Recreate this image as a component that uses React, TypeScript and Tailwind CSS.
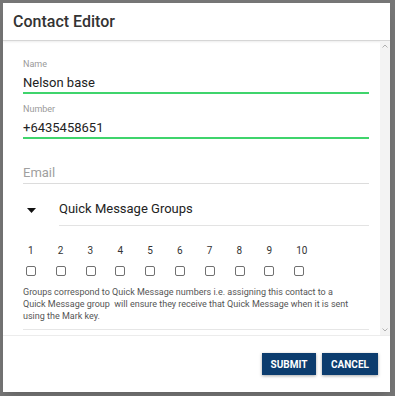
import React from "react";

type FieldProps = {
	label: string;
	value?: string;
	placeholder?: string;
	active?: boolean;
};

const Field = ({ label, value, placeholder, active }: FieldProps) => {
	return (
		<div className={active ? "border-b-2 border-[#3fd46c]" : "border-b border-[#dcdcdc] pb-[1px]"}>
			<div className="h-[12px] text-[9px] leading-[12px] text-[#9a9a9a]">{label}</div>
			<div className={`mt-[4px] h-[18px] text-[13px] leading-[18px] ${value ? "text-[#222]" : "text-[#a0a0a0]"}`}>
				{value || placeholder}
			</div>
		</div>
	);
};

const groups = [1, 2, 3, 4, 5, 6, 7, 8, 9, 10];

const App = () => {
	const [checked, setChecked] = React.useState<number[]>([]);

	// *** toggle a quick message group ***
	const toggle = (n: number) => {
		setChecked((prev) => (prev.includes(n) ? prev.filter((x) => x !== n) : [...prev, n]));
	};

	return (
		<div
			className="flex h-[396px] w-[395px] bg-[#767676] pt-[3px] pb-[4px] pl-[3px] pr-[5px]"
			style={{ fontFamily: "Roboto, 'Liberation Sans', sans-serif" }}
		>
			<div className="flex flex-1 flex-col overflow-hidden bg-white shadow-lg">
				{/* *** header *** */}
				<div className="flex h-[38px] shrink-0 items-center border-b border-[#d6d6d6] px-[10px] shadow-[0_1px_2px_rgba(0,0,0,0.08)]">
					<h2 className="text-[16px] font-medium text-[#333]">Contact Editor</h2>
				</div>

				{/* *** body *** */}
				<div className="flex h-[294px] shrink-0 overflow-hidden">
					<div className="flex-1 pl-[20px] pr-[11px] pt-[17px]">
						<Field label="Name" value="Nelson base" active />
						<div className="mt-[9px]">
							<Field label="Number" value="+6435458651" active />
						</div>
						<div className="mt-[9px]">
							<Field label="" placeholder="Email" />
						</div>

						<div className="mt-[16px] flex">
							<div className="flex w-[36px] items-center pl-[4px] pb-[6px]">
								<svg width="9" height="5" viewBox="0 0 9 5">
									<path d="M0 0 L9 0 L4.5 5 Z" fill="#111" />
								</svg>
							</div>
							<div className="flex-1 border-b border-[#e3e3e3] pb-[7px] text-[13px] leading-[18px] text-[#222]">
								Quick Message Groups
							</div>
						</div>

						<div className="mt-[19px] ml-[3px] flex">
							{groups.map((n) => (
								<div key={n} className="flex w-[29.8px] flex-col">
									<span className="pl-[2px] text-[10px] leading-[12px] text-[#333]">{n}</span>
									<button
										onClick={() => toggle(n)}
										className={`mt-[9px] h-[10px] w-[10px] rounded-[2px] border-[1.5px] border-[#707070] ${checked.includes(n) ? "bg-[#0c3c6e]" : "bg-white"}`}
									/>
								</div>
							))}
						</div>

						<p className="mt-[10px] max-w-[332px] text-[9px] leading-[12px] text-[#555]">
							Groups correspond to Quick Message numbers i.e. assigning this contact to a Quick Message group{"\u00a0"} will
							ensure they receive that Quick Message when it is sent using the Mark key.
						</p>
						<div className="mt-[7px] border-b border-[#e6e6e6]" />
					</div>

					{/* *** scrollbar *** */}
					<div className="flex w-[10px] flex-col items-center justify-between bg-[#f3f3f3] py-[3px]">
						<svg width="6" height="4" viewBox="0 0 6 4">
							<path d="M0.5 3.5 L3 1 L5.5 3.5" stroke="#b0b0b0" fill="none" />
						</svg>
						<svg width="6" height="4" viewBox="0 0 6 4">
							<path d="M0.5 0.5 L3 3 L5.5 0.5" stroke="#b0b0b0" fill="none" />
						</svg>
					</div>
				</div>

				{/* *** footer *** */}
				<div className="flex flex-1 items-start justify-end gap-[6px] border-t border-[#ececec] pr-[12px] pt-[17px]">
					<button className="h-[22px] w-[54px] bg-[#0c3c6e] text-[10px] font-bold text-white shadow-[0_1px_3px_rgba(0,0,0,0.35)]">
						SUBMIT
					</button>
					<button className="h-[22px] w-[56px] bg-[#0c3c6e] text-[10px] font-bold text-white shadow-[0_1px_3px_rgba(0,0,0,0.35)]">
						CANCEL
					</button>
				</div>
			</div>
		</div>
	);
};

export default App;
